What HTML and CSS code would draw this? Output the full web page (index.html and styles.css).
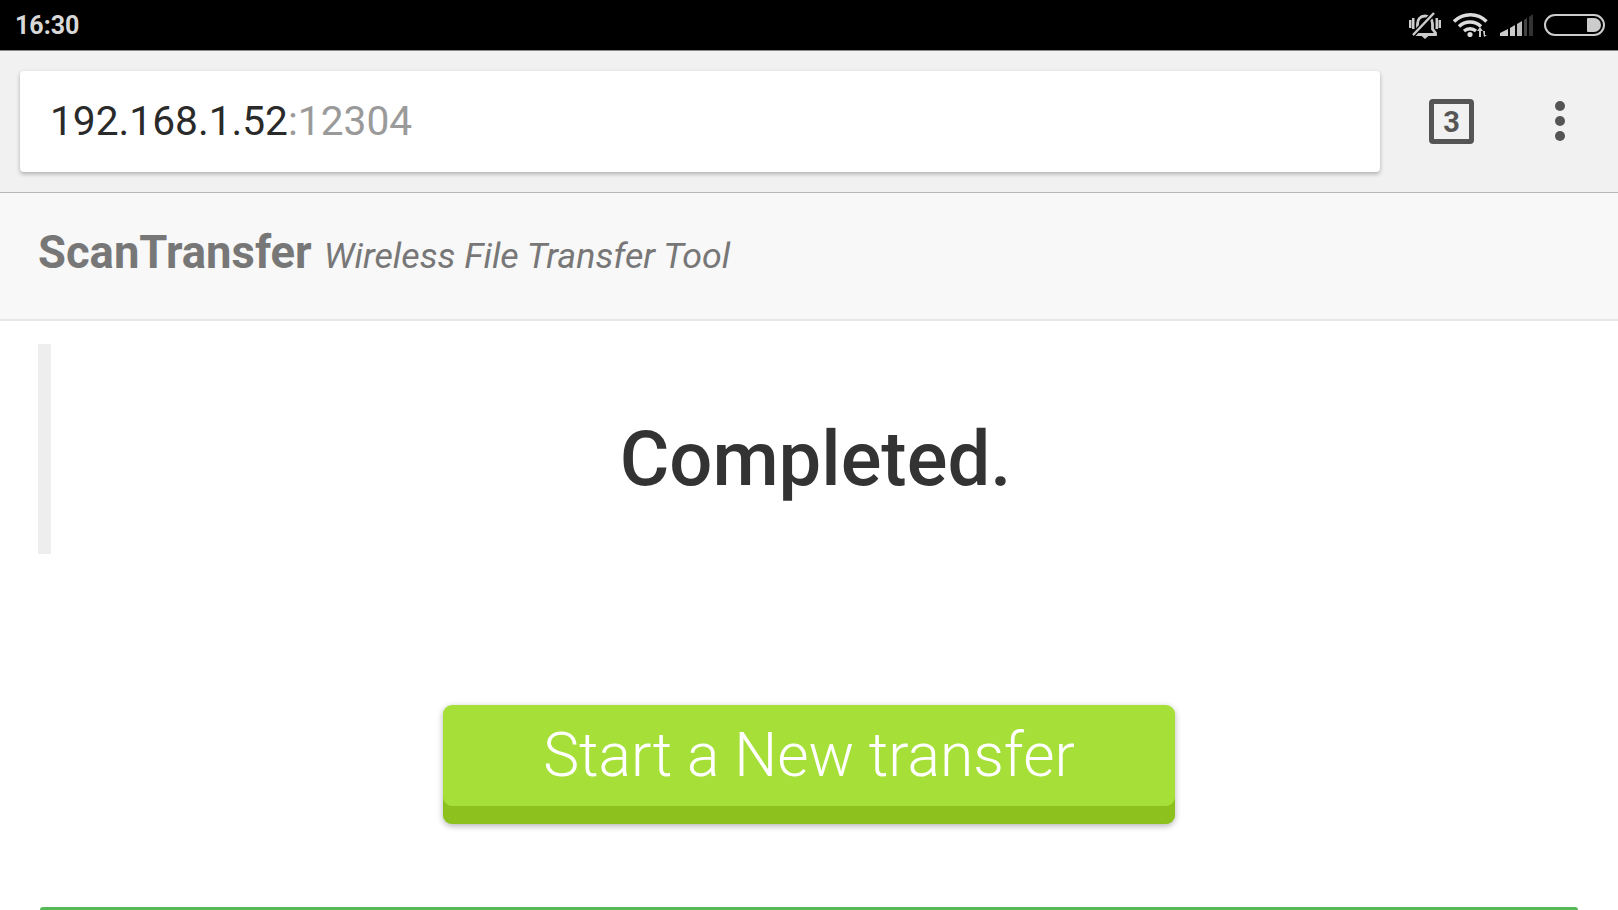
FILE: index.html
```html
<!DOCTYPE html>
<html lang="en">
<head>
<meta charset="utf-8">
<title>ScanTransfer</title>
<link rel="stylesheet" href="styles.css">
</head>
<body>
<div class="status-bar">
  <span class="time">16:30</span>
  <div class="status-icons">
    <svg class="ico-bell" width="32" height="27" viewBox="0 0 32 27"><path d="M16 4c-5 0-7.500 3.500-7.500 8v5L5.500 21v1.500h21V21l-3-4v-5c0-4.500-2.500-8-7.500-8z" fill="none" stroke="#ccc" stroke-width="2.800"/><path d="M11.500 23h9L16 27z" fill="#ccc"/><path d="M0 8h2.500v8H0zM29.500 8H32v8h-2.500zM3 6h2.500v11H3zM26.500 6H29v11h-2.500z" fill="#ccc"/><path d="M25 1L4 23" stroke="#000" stroke-width="5"/><path d="M25 1L4 23" stroke="#ccc" stroke-width="2.500"/></svg>
    <svg class="ico-wifi" width="35" height="24" viewBox="0 0 35 24"><path d="M1 8.500C10.500-.5 24.500-.5 33.500 8.500M6 13.500c6-6 16-6 22 0M11 18c3.500-3 8.500-3 12 0" fill="none" stroke="#ddd" stroke-width="3.400"/><circle cx="17" cy="21.500" r="2.600" fill="#ddd"/><path d="M27 14l3 4h-2v6h-2v-6h-2zM30 18h2v4h2l-3 2z" fill="#ccc"/></svg>
    <svg class="ico-signal" width="33" height="22" viewBox="0 0 33 22"><path d="M0 22v-3l8-4v7z" fill="#ccc"/><path d="M10 22v-8l5-3v11z" fill="#ccc"/><path d="M17 22V10l5-3v15z" fill="#bbb"/><path d="M24 22V6l3-2v18z" fill="#444"/><path d="M29 22V3l4-3v22z" fill="#333"/></svg>
    <div class="battery"><div class="battery-fill"></div></div>
  </div>
</div>
<div class="browser-bar">
  <div class="url-box"><span class="host">192.168.1.52</span><span class="port">:12304</span></div>
  <div class="tab-count">3</div>
  <div class="menu-dots"><i></i><i></i><i></i></div>
</div>
<header class="site-header">
  <span class="brand">ScanTransfer</span>
  <em class="tagline">Wireless File Transfer Tool</em>
</header>
<main class="content">
  <blockquote class="notice"><h1>Completed.</h1></blockquote>
  <div class="actions"><button class="new-btn">Start a New transfer</button></div>
  <div class="progress"></div>
</main>
</body>
</html>
```
FILE: styles.css
```css
* { box-sizing: border-box; }
html, body { margin: 0; padding: 0; height: 910px; overflow: hidden; background: #fff; font-family: Roboto, "Noto Sans", sans-serif; }
.status-bar { height: 51px; background: #000; border-bottom: 1px solid #8a8a8a; display: flex; align-items: center; justify-content: space-between; padding: 0 13px 0 15px; }
.time { color: #d8d8d8; font-size: 25px; font-weight: 700; margin-top: 1px; }
.status-icons { display: flex; align-items: center; }
.ico-bell { margin-right: 12px; }
.ico-wifi { margin-right: 12px; }
.ico-signal { margin-right: 11px; }
.battery { width: 61px; height: 22px; border: 2px solid #ccc; border-radius: 11px; display: flex; justify-content: flex-end; padding: 2px; }
.battery-fill { width: 14px; background: #ccc; border-radius: 1px 7px 7px 1px; }
.browser-bar { height: 142px; background: #f1f1f1; border-bottom: 1px solid #b8b8b8; display: flex; align-items: flex-start; padding: 20px 0 0 20px; }
.url-box { width: 1360px; height: 101px; background: #fff; border-radius: 4px; box-shadow: 0 2px 4px rgba(0,0,0,.28); display: flex; align-items: center; padding: 0 0 2px 30px; font-size: 40.7px; }
.host { color: #2a2a2a; }
.port { color: #9a9a9a; }
.tab-count { width: 45px; height: 45px; margin: 28px 0 0 49px; border: 5px solid #555; border-radius: 4px; color: #555; font-size: 29px; font-weight: 700; display: flex; align-items: center; justify-content: center; }
.menu-dots { margin: 30px 0 0 81px; display: flex; flex-direction: column; gap: 5px; }
.menu-dots i { display: block; width: 10px; height: 10px; border-radius: 50%; background: #555; }
.site-header { height: 128px; background: #f8f8f8; border-bottom: 2px solid #e7e7e7; display: flex; align-items: baseline; padding: 33px 0 0 38px; color: #777; }
.brand { font-size: 45.4px; font-weight: 700; margin-right: 12px; }
.tagline { font-size: 35.8px; font-weight: 400; font-style: italic; }
.content { padding: 23px 38px 0; }
.notice { margin: 0; height: 210px; border-left: 13px solid #eee; padding: 20px 0 0; display: flex; align-items: center; justify-content: center; }
.notice h1 { margin: 0; font-size: 76px; font-weight: 500; color: #333; }
.actions { display: flex; justify-content: center; margin-top: 151px; }
.new-btn { width: 732px; height: 119px; padding: 0 0 19px; border: 0; border-radius: 9px; background: #a5df37; color: #fff; font-family: inherit; font-size: 60.5px; font-weight: 300; box-shadow: inset 0 -18px 0 #8dc11d, 0 2px 6px rgba(0,0,0,.3); }
.progress { height: 3px; margin: 83px 2px 0; background: #55b957; border-radius: 3px 3px 0 0; }
```
